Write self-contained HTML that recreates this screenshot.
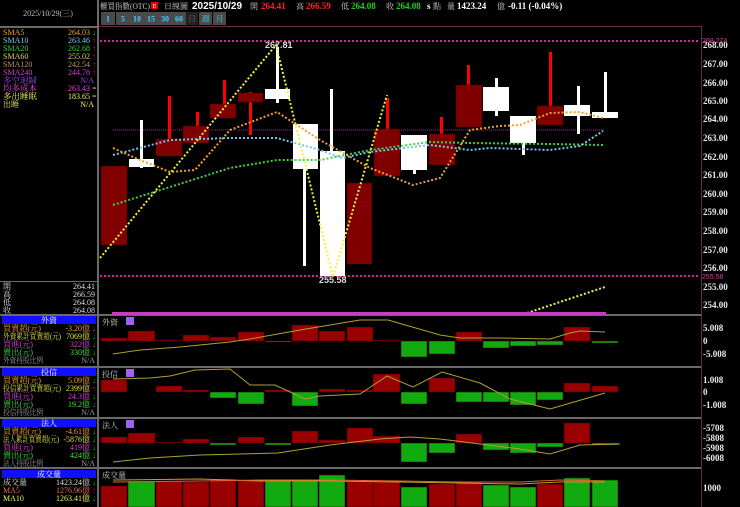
<!DOCTYPE html>
<html><head><meta charset="utf-8"><style>
html,body{margin:0;padding:0;background:#000;width:740px;height:507px;overflow:hidden}
svg{display:block}
text{font-family:"Liberation Serif","Noto Serif CJK SC","WenQuanYi Zen Hei",serif;}
.ax{font-family:"Liberation Serif",serif;font-weight:bold;font-size:9px;fill:#e8e8e8}
.s{font-size:8px}
</style></head><body>
<svg width="740" height="507" viewBox="0 0 740 507" xmlns="http://www.w3.org/2000/svg">
<rect width="740" height="507" fill="#000"/>
<rect x="97" y="0" width="2" height="507" fill="#6a6a6a"/>
<rect x="0" y="26" width="97" height="2" fill="#6a6a6a"/>
<text x="48" y="16" text-anchor="middle" class="s" fill="#bbb">2025/10/29(三)</text>
<g class="s">
<text x="3" y="35" fill="#f0a030">SMA5</text><text x="90" y="35" text-anchor="end" fill="#f0a030">264.03</text><text x="92" y="35" fill="#0c0">↓</text>
<text x="3" y="43" fill="#70c8f0">SMA10</text><text x="90" y="43" text-anchor="end" fill="#70c8f0">263.46</text><text x="92" y="43" fill="#f00">↑</text>
<text x="3" y="51" fill="#30d030">SMA20</text><text x="90" y="51" text-anchor="end" fill="#30d030">262.68</text><text x="92" y="51" fill="#f00">↑</text>
<text x="3" y="59" fill="#d8d070">SMA60</text><text x="90" y="59" text-anchor="end" fill="#d8d070">255.02</text><text x="92" y="59" fill="#f00">↑</text>
<text x="3" y="67" fill="#c09060">SMA120</text><text x="90" y="67" text-anchor="end" fill="#c09060">242.54</text><text x="92" y="67" fill="#f00">↑</text>
<text x="3" y="75" fill="#d040d0">SMA240</text><text x="90" y="75" text-anchor="end" fill="#d040d0">244.78</text><text x="92" y="75" fill="#f00">↑</text>
<text x="3" y="83" fill="#9040f0" textLength="34" lengthAdjust="spacingAndGlyphs">多空迴歸</text><text x="94" y="83" text-anchor="end" fill="#9040f0">N/A</text>
<text x="3" y="91" fill="#f040f0" textLength="34" lengthAdjust="spacingAndGlyphs">均多成本</text><text x="90" y="91" text-anchor="end" fill="#f040f0">263.43</text><text x="92" y="91" fill="#ddd">=</text>
<text x="3" y="99" fill="#f0f060" textLength="34" lengthAdjust="spacingAndGlyphs">多出睡眠</text><text x="90" y="99" text-anchor="end" fill="#f0f060">183.65</text><text x="92" y="99" fill="#ddd">=</text>
<text x="3" y="107" fill="#f0f060">出睡</text><text x="94" y="107" text-anchor="end" fill="#f0f060">N/A</text>
</g>
<rect x="0" y="281" width="97" height="1" fill="#6a6a6a"/>
<g class="s" fill="#ddd">
<text x="3" y="289">開</text><text x="95" y="289" text-anchor="end">264.41</text>
<text x="3" y="297">高</text><text x="95" y="297" text-anchor="end">266.59</text>
<text x="3" y="305">低</text><text x="95" y="305" text-anchor="end">264.08</text>
<text x="3" y="313">收</text><text x="95" y="313" text-anchor="end">264.08</text>
</g>
<rect x="0" y="314" width="701" height="2" fill="#6a6a6a"/>
<rect x="0" y="366" width="701" height="2" fill="#6a6a6a"/>
<rect x="0" y="417" width="701" height="2" fill="#6a6a6a"/>
<rect x="0" y="467" width="701" height="2" fill="#6a6a6a"/>
<g class="s">
<rect x="2" y="316" width="94" height="8" fill="#1010ff"/><text x="49" y="323" text-anchor="middle" fill="#fff">外資</text>
<text x="3" y="331" fill="#f0a030" textLength="38" lengthAdjust="spacingAndGlyphs">買賣超(元)</text><text x="90" y="331" text-anchor="end" fill="#f0a030">-3.20億</text><text x="92" y="331" fill="#0c0">↓</text>
<text x="3" y="339" fill="#e0e040" textLength="58" lengthAdjust="spacingAndGlyphs">外資累計買賣超(元)</text><text x="90" y="339" text-anchor="end" fill="#e0e040">7069億</text><text x="92" y="339" fill="#0c0">↓</text>
<text x="3" y="347" fill="#e040e0" textLength="30" lengthAdjust="spacingAndGlyphs">買進(元)</text><text x="90" y="347" text-anchor="end" fill="#e040e0">322億</text><text x="92" y="347" fill="#0c0">↓</text>
<text x="3" y="355" fill="#40e040" textLength="30" lengthAdjust="spacingAndGlyphs">賣出(元)</text><text x="90" y="355" text-anchor="end" fill="#40e040">330億</text><text x="92" y="355" fill="#0c0">↓</text>
<text x="3" y="363" fill="#999" textLength="40" lengthAdjust="spacingAndGlyphs">外資持股比例</text><text x="95" y="363" text-anchor="end" fill="#999">N/A</text>

<rect x="2" y="368" width="94" height="8" fill="#1010ff"/><text x="49" y="375" text-anchor="middle" fill="#fff">投信</text>
<text x="3" y="383" fill="#f0a030" textLength="38" lengthAdjust="spacingAndGlyphs">買賣超(元)</text><text x="90" y="383" text-anchor="end" fill="#f0a030">5.09億</text><text x="92" y="383" fill="#0c0">↓</text>
<text x="3" y="391" fill="#e0e040" textLength="58" lengthAdjust="spacingAndGlyphs">投信累計買賣超(元)</text><text x="90" y="391" text-anchor="end" fill="#e0e040">2399億</text><text x="92" y="391" fill="#f00">↑</text>
<text x="3" y="399" fill="#e040e0" textLength="30" lengthAdjust="spacingAndGlyphs">買進(元)</text><text x="90" y="399" text-anchor="end" fill="#e040e0">24.3億</text><text x="92" y="399" fill="#0c0">↓</text>
<text x="3" y="407" fill="#40e040" textLength="30" lengthAdjust="spacingAndGlyphs">賣出(元)</text><text x="90" y="407" text-anchor="end" fill="#40e040">19.2億</text><text x="92" y="407" fill="#0c0">↓</text>
<text x="3" y="415" fill="#999" textLength="40" lengthAdjust="spacingAndGlyphs">投信持股比例</text><text x="95" y="415" text-anchor="end" fill="#999">N/A</text>

<rect x="2" y="419" width="94" height="8" fill="#1010ff"/><text x="49" y="426" text-anchor="middle" fill="#fff">法人</text>
<text x="3" y="434" fill="#f0a030" textLength="38" lengthAdjust="spacingAndGlyphs">買賣超(元)</text><text x="90" y="434" text-anchor="end" fill="#f0a030">-4.61億</text><text x="92" y="434" fill="#0c0">↓</text>
<text x="3" y="442" fill="#e0e040" textLength="56" lengthAdjust="spacingAndGlyphs">法人累計買賣超(元)</text><text x="90" y="442" text-anchor="end" fill="#e0e040">-5876億</text><text x="92" y="442" fill="#0c0">↓</text>
<text x="3" y="450" fill="#e040e0" textLength="30" lengthAdjust="spacingAndGlyphs">買進(元)</text><text x="90" y="450" text-anchor="end" fill="#e040e0">419億</text><text x="92" y="450" fill="#0c0">↓</text>
<text x="3" y="458" fill="#40e040" textLength="30" lengthAdjust="spacingAndGlyphs">賣出(元)</text><text x="90" y="458" text-anchor="end" fill="#40e040">424億</text><text x="92" y="458" fill="#0c0">↓</text>
<text x="3" y="466" fill="#999" textLength="40" lengthAdjust="spacingAndGlyphs">法人持股比例</text><text x="95" y="466" text-anchor="end" fill="#999">N/A</text>

<rect x="2" y="470" width="94" height="8" fill="#1010ff"/><text x="49" y="477" text-anchor="middle" fill="#fff">成交量</text>
<text x="3" y="485" fill="#ddd">成交量</text><text x="90" y="485" text-anchor="end" fill="#ddd">1423.24億</text><text x="92" y="485" fill="#0c0">↓</text>
<text x="3" y="493" fill="#f07050">MA5</text><text x="90" y="493" text-anchor="end" fill="#f07050">1276.96億</text><text x="92" y="493" fill="#f00">↑</text>
<text x="3" y="501" fill="#f0f060">MA10</text><text x="90" y="501" text-anchor="end" fill="#f0f060">1263.41億</text><text x="92" y="501" fill="#0c0">↓</text>
</g>

<text x="100" y="9" class="s" fill="#ccc" textLength="50" lengthAdjust="spacingAndGlyphs">櫃買指數(OTC)</text>
<rect x="151" y="2" width="7" height="7" fill="#e00"/><text x="154.5" y="8" font-size="6" text-anchor="middle" fill="#fff">E</text>
<text x="164" y="9" class="s" fill="#ccc">日線圖</text>
<text x="192" y="9" font-size="10" font-weight="bold" fill="#fff" style="font-family:'Liberation Sans',sans-serif">2025/10/29</text>
<g font-size="9" font-weight="bold" style="font-family:'Liberation Sans',sans-serif">
<text x="250" y="9" class="s" font-weight="normal" fill="#ccc">開</text><text x="261" y="9" fill="#f22">264.41</text>
<text x="296" y="9" class="s" font-weight="normal" fill="#ccc">高</text><text x="306" y="9" fill="#f22">266.59</text>
<text x="341" y="9" class="s" font-weight="normal" fill="#ccc">低</text><text x="351" y="9" fill="#2c2">264.08</text>
<text x="386" y="9" class="s" font-weight="normal" fill="#ccc">收</text><text x="396" y="9" fill="#2c2">264.08</text>
<text x="427" y="9" fill="#fff">s</text><text x="433" y="9" class="s" font-weight="normal" fill="#ccc">點</text>
<text x="447" y="9" class="s" font-weight="normal" fill="#ccc">量</text><text x="457" y="9" fill="#fff">1423.24</text>
<text x="497" y="9" class="s" font-weight="normal" fill="#ccc">億</text>
<text x="508" y="9" fill="#fff">-0.11 (-0.04%)</text>
</g>
<g font-size="8" font-weight="bold" style="font-family:'Liberation Sans',sans-serif">
<rect x="101" y="12" width="14" height="13" fill="#4a4a4a"/><text x="108" y="21.5" text-anchor="middle" fill="#4cf">1</text>
<rect x="116" y="12" width="14" height="13" fill="#4a4a4a"/><text x="123" y="21.5" text-anchor="middle" fill="#4cf">5</text>
<rect x="130" y="12" width="14" height="13" fill="#4a4a4a"/><text x="137" y="21.5" text-anchor="middle" fill="#4cf">10</text>
<rect x="144" y="12" width="14" height="13" fill="#4a4a4a"/><text x="151" y="21.5" text-anchor="middle" fill="#4cf">15</text>
<rect x="158" y="12" width="14" height="13" fill="#4a4a4a"/><text x="165" y="21.5" text-anchor="middle" fill="#4cf">30</text>
<rect x="172" y="12" width="14" height="13" fill="#4a4a4a"/><text x="179" y="21.5" text-anchor="middle" fill="#4cf">60</text>
<rect x="186" y="12" width="12" height="13" fill="#222"/><text x="192" y="21.5" text-anchor="middle" font-weight="normal" fill="#666">日</text>
<rect x="199" y="12" width="13" height="13" fill="#4a4a4a"/><text x="205.5" y="21.5" text-anchor="middle" font-weight="normal" fill="#4cf">週</text>
<rect x="213" y="12" width="13" height="13" fill="#4a4a4a"/><text x="219.5" y="21.5" text-anchor="middle" font-weight="normal" fill="#4cf">月</text>
</g>
<rect x="99" y="26" width="603" height="1" fill="#603040"/>
<rect x="701" y="26" width="1" height="481" fill="#603040"/>

<line x1="100" y1="41" x2="700" y2="41" stroke="#e020a0" stroke-width="2" stroke-dasharray="2,2"/>
<line x1="100" y1="276" x2="700" y2="276" stroke="#e020a0" stroke-width="2" stroke-dasharray="2,2"/>
<line x1="113" y1="130" x2="605" y2="130" stroke="#a020a0" stroke-width="1" stroke-dasharray="1,1"/>

<g>
<rect x="140" y="120" width="3" height="48" fill="#fff"/>
<rect x="168" y="96" width="3" height="43" fill="#f00"/>
<rect x="196" y="112" width="3" height="14" fill="#f00"/>
<rect x="223" y="80" width="3" height="24" fill="#f00"/>
<rect x="249" y="92" width="3" height="43" fill="#f00"/>
<rect x="276" y="47" width="3" height="56" fill="#fff"/>
<rect x="303" y="160" width="3" height="106" fill="#fff"/>
<rect x="330" y="89" width="3" height="62" fill="#fff"/>
<rect x="386" y="98" width="3" height="31" fill="#f00"/>
<rect x="413" y="160" width="3" height="14" fill="#fff"/>
<rect x="440" y="117" width="3" height="17" fill="#f00"/>
<rect x="467" y="65" width="3" height="20" fill="#f00"/>
<rect x="495" y="78" width="3" height="38" fill="#fff"/>
<rect x="522" y="140" width="3" height="15" fill="#fff"/>
<rect x="549" y="52" width="3" height="54" fill="#f00"/>
<rect x="577" y="86" width="3" height="48" fill="#fff"/>
<rect x="604" y="72" width="3" height="40" fill="#fff"/>
</g>
<g stroke="#400" stroke-width="0.5">
<rect x="101" y="166" width="26" height="79" fill="#800000"/>
<rect x="156" y="139" width="26" height="17" fill="#800000"/>
<rect x="183" y="126" width="26" height="17" fill="#800000"/>
<rect x="210" y="104" width="26" height="14" fill="#800000"/>
<rect x="238" y="93" width="25" height="9" fill="#800000"/>
<rect x="347" y="183" width="25" height="81" fill="#800000"/>
<rect x="374" y="129" width="26" height="47" fill="#800000"/>
<rect x="429" y="134" width="26" height="31" fill="#800000"/>
<rect x="456" y="85" width="26" height="42" fill="#800000"/>
<rect x="537" y="106" width="26" height="19" fill="#800000"/>
</g>
<g fill="#fff">
<rect x="129" y="159" width="25" height="8"/>
<rect x="265" y="89" width="25" height="10"/>
<rect x="293" y="124" width="25" height="45"/>
<rect x="320" y="151" width="25" height="125"/>
<rect x="401" y="135" width="26" height="35"/>
<rect x="483" y="87" width="26" height="24"/>
<rect x="510" y="116" width="26" height="27"/>
<rect x="564" y="105" width="26" height="11"/>
<rect x="592" y="112" width="26" height="6"/>
</g>
<g fill="none" stroke-width="2" stroke-dasharray="2,2">
<polyline stroke="#40d040" points="113,205 170,187 230,168 277,160 320,160 370,150 430,142 470,143 550,144 603,145"/>
<polyline stroke="#70c8f0" points="113,155 170,140 230,138 277,138 320,150 342,158 370,152 430,145 470,150 490,148 550,150 580,146 603,131"/>
<polyline stroke="#f0a030" points="113,148 140,160 170,172 195,170 230,130 277,112 320,140 370,168 413,185 440,178 470,130 500,126 520,125 550,113 580,112 603,118"/>
<polyline stroke="#f0f040" points="100,258 276,45 333,277 387,95"/>
<polyline stroke="#f0f040" points="527,313 605,287"/>
</g>
<text x="265" y="48" font-size="9" font-weight="bold" fill="#ddd" style="font-family:'Liberation Sans',sans-serif">267.81</text>
<text x="319" y="283" font-size="9" font-weight="bold" fill="#ddd" style="font-family:'Liberation Sans',sans-serif">255.58</text>
<rect x="112" y="312" width="494" height="3" fill="#c040c0"/>

<g class="ax">
<text x="703" y="48">268.00</text><text x="703" y="67">267.00</text><text x="703" y="86">266.00</text>
<text x="703" y="104">265.00</text><text x="703" y="122">264.00</text><text x="703" y="141">263.00</text>
<text x="703" y="160">262.00</text><text x="703" y="178">261.00</text><text x="703" y="197">260.00</text>
<text x="703" y="215">259.00</text><text x="703" y="234">258.00</text><text x="703" y="253">257.00</text>
<text x="703" y="271">256.00</text><text x="703" y="290">255.00</text><text x="703" y="308">254.00</text>
<text x="703" y="331">5.008</text><text x="703" y="344">0</text><text x="703" y="357">-5.008</text>
<text x="703" y="383">1.008</text><text x="703" y="395">0</text><text x="703" y="408">-1.008</text>
<text x="703" y="431">-5708</text><text x="703" y="441">-5808</text><text x="703" y="451">-5908</text><text x="703" y="461">-6008</text>
<text x="703" y="491">1000</text>
</g>
<text x="702" y="43" font-size="7" fill="#d040a0" style="font-family:'Liberation Sans',sans-serif">268.274</text>
<text x="702" y="279" font-size="7" fill="#d040a0" style="font-family:'Liberation Sans',sans-serif">255.58</text>

<g class="s" fill="#ccc">
<text x="102" y="325">外資</text><rect x="126" y="317" width="8" height="8" fill="#a060f0"/>
<text x="102" y="377">投信</text><rect x="126" y="369" width="8" height="8" fill="#a060f0"/>
<text x="102" y="428">法人</text><rect x="126" y="420" width="8" height="8" fill="#a060f0"/>
<text x="102" y="478">成交量</text>
</g>

<g stroke="#300" stroke-width="0.5">
<rect x="101" y="338" width="26" height="3" fill="#900"/>
<rect x="128" y="331" width="27" height="10" fill="#900"/>
<rect x="156" y="340" width="26" height="1" fill="#900"/>
<rect x="183" y="335" width="26" height="6" fill="#900"/>
<rect x="210" y="337" width="26" height="4" fill="#900"/>
<rect x="238" y="332" width="26" height="9" fill="#900"/>
<rect x="292" y="325" width="26" height="16" fill="#900"/>
<rect x="319" y="331" width="26" height="10" fill="#900"/>
<rect x="347" y="327" width="26" height="14" fill="#900"/>
<rect x="373" y="340" width="27" height="1" fill="#900"/>
<rect x="456" y="332" width="26" height="9" fill="#900"/>
<rect x="564" y="327" width="26" height="14" fill="#900"/>
<rect x="265" y="341" width="26" height="1" fill="#1a1"/>
<rect x="401" y="341" width="26" height="16" fill="#1a1"/>
<rect x="429" y="341" width="26" height="13" fill="#1a1"/>
<rect x="483" y="341" width="26" height="7" fill="#1a1"/>
<rect x="510" y="341" width="26" height="5" fill="#1a1"/>
<rect x="537" y="341" width="26" height="4" fill="#1a1"/>
<rect x="592" y="341" width="26" height="2" fill="#1a1"/>
</g>
<polyline fill="none" stroke="#b0a030" stroke-width="1" points="113,354 140,350 180,347 230,342 250,339 300,330 360,320 388,320 440,335 460,338 500,338 550,339 570,333 580,331 605,332"/>

<g stroke="#300" stroke-width="0.5">
<rect x="101" y="380" width="26" height="12" fill="#900"/>
<rect x="156" y="386" width="26" height="6" fill="#900"/>
<rect x="183" y="390" width="26" height="2" fill="#900"/>
<rect x="265" y="390" width="26" height="2" fill="#900"/>
<rect x="319" y="389" width="26" height="3" fill="#900"/>
<rect x="347" y="390" width="26" height="2" fill="#900"/>
<rect x="373" y="374" width="27" height="18" fill="#900"/>
<rect x="429" y="378" width="26" height="14" fill="#900"/>
<rect x="564" y="383" width="26" height="9" fill="#900"/>
<rect x="592" y="386" width="26" height="6" fill="#900"/>
<rect x="210" y="392" width="26" height="6" fill="#1a1"/>
<rect x="238" y="392" width="26" height="12" fill="#1a1"/>
<rect x="292" y="392" width="26" height="14" fill="#1a1"/>
<rect x="401" y="392" width="26" height="12" fill="#1a1"/>
<rect x="456" y="392" width="26" height="10" fill="#1a1"/>
<rect x="483" y="392" width="26" height="10" fill="#1a1"/>
<rect x="510" y="392" width="26" height="13" fill="#1a1"/>
<rect x="537" y="392" width="26" height="8" fill="#1a1"/>
</g>
<polyline fill="none" stroke="#b0a030" stroke-width="1" points="113,379 150,378 170,376 195,370 230,369 250,385 275,385 305,399 320,396 360,394 387,376 413,387 442,372 480,383 510,399 550,409 605,393"/>

<g stroke="#300" stroke-width="0.5">
<rect x="101" y="437" width="26" height="6" fill="#900"/>
<rect x="128" y="433" width="27" height="10" fill="#900"/>
<rect x="156" y="442" width="26" height="1" fill="#900"/>
<rect x="183" y="439" width="26" height="4" fill="#900"/>
<rect x="238" y="437" width="26" height="6" fill="#900"/>
<rect x="292" y="431" width="26" height="12" fill="#900"/>
<rect x="319" y="440" width="26" height="3" fill="#900"/>
<rect x="347" y="428" width="26" height="15" fill="#900"/>
<rect x="373" y="436" width="27" height="7" fill="#900"/>
<rect x="456" y="434" width="26" height="9" fill="#900"/>
<rect x="564" y="423" width="26" height="20" fill="#900"/>
<rect x="210" y="443" width="26" height="2" fill="#1a1"/>
<rect x="265" y="443" width="26" height="2" fill="#1a1"/>
<rect x="401" y="443" width="26" height="19" fill="#1a1"/>
<rect x="429" y="443" width="26" height="10" fill="#1a1"/>
<rect x="483" y="443" width="26" height="7" fill="#1a1"/>
<rect x="510" y="443" width="26" height="10" fill="#1a1"/>
<rect x="537" y="443" width="26" height="4" fill="#1a1"/>
<rect x="592" y="443" width="26" height="2" fill="#1a1"/>
</g>
<polyline fill="none" stroke="#b0a030" stroke-width="1" points="113,462 150,458 200,455 278,453 330,445 380,439 410,437 440,439 480,444 520,449 550,454 580,445 620,444"/>

<g stroke="#300" stroke-width="0.5">
<rect x="101" y="486" width="26" height="21" fill="#900"/>
<rect x="156" y="481" width="26" height="26" fill="#900"/>
<rect x="183" y="482" width="26" height="25" fill="#900"/>
<rect x="210" y="479" width="26" height="28" fill="#900"/>
<rect x="238" y="480" width="26" height="27" fill="#900"/>
<rect x="347" y="481" width="26" height="26" fill="#900"/>
<rect x="373" y="481" width="27" height="26" fill="#900"/>
<rect x="429" y="484" width="26" height="23" fill="#900"/>
<rect x="456" y="482" width="26" height="25" fill="#900"/>
<rect x="537" y="484" width="26" height="23" fill="#900"/>
<rect x="128" y="481" width="27" height="26" fill="#1a1"/>
<rect x="265" y="481" width="26" height="26" fill="#1a1"/>
<rect x="292" y="481" width="26" height="26" fill="#1a1"/>
<rect x="319" y="475" width="26" height="32" fill="#1a1"/>
<rect x="401" y="487" width="26" height="20" fill="#1a1"/>
<rect x="483" y="485" width="26" height="22" fill="#1a1"/>
<rect x="510" y="487" width="26" height="20" fill="#1a1"/>
<rect x="564" y="478" width="26" height="29" fill="#1a1"/>
<rect x="592" y="480" width="26" height="27" fill="#1a1"/>
</g>
<polyline fill="none" stroke="#c0a020" stroke-width="1" points="113,480 200,479 260,481 330,481 400,482 460,483 520,484 560,482 605,482"/>
<polyline fill="none" stroke="#e06030" stroke-width="1" points="113,482 200,481 260,480 330,480 400,481 460,482 520,482 560,480 605,481"/>
</svg>
</body></html>
